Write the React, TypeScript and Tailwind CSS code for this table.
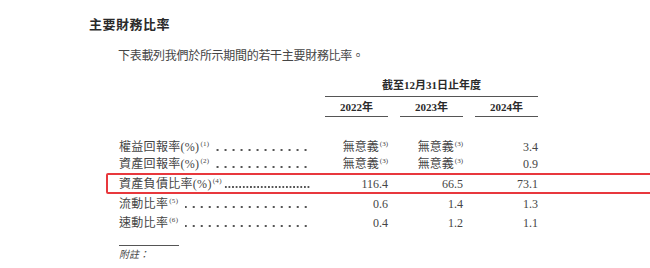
const serif = "font-['Liberation_Serif','Noto_Sans_CJK_TC',serif]";

type Row = {
  label: string;
  note: string;
  values: { v: string; note?: string }[];
  dense?: boolean;
  highlight?: boolean;
  h: string;
};

const rows: Row[] = [
  { label: '權益回報率(%)', note: '(1)', values: [{ v: '無意義', note: '(3)' }, { v: '無意義', note: '(3)' }, { v: '3.4' }], h: 'h-[17px]' },
  { label: '資產回報率(%)', note: '(2)', values: [{ v: '無意義', note: '(3)' }, { v: '無意義', note: '(3)' }, { v: '0.9' }], h: 'h-[17px]' },
  { label: '資產負債比率(%)', note: '(4)', values: [{ v: '116.4' }, { v: '66.5' }, { v: '73.1' }], dense: true, highlight: true, h: 'h-[21px]' },
  { label: '流動比率', note: '(5)', values: [{ v: '0.6' }, { v: '1.4' }, { v: '1.3' }], h: 'h-[19px]' },
  { label: '速動比率', note: '(6)', values: [{ v: '0.4' }, { v: '1.2' }, { v: '1.1' }], h: 'h-[19px]' },
];

// dot leader drawn as a repeating background, not text
const Dots = ({ dense }: { dense?: boolean }) => (
  <div
    className={
      dense
        ? 'flex-1 h-[2px] mb-[3px] ml-[2px] mr-[3px] bg-repeat-x bg-left bg-[length:3.6px_2px] bg-[radial-gradient(circle,#555_0.75px,transparent_1px)]'
        : 'flex-1 h-[2px] mb-[3px] ml-[7px] mr-[3px] bg-repeat-x bg-right bg-[length:8px_2px] bg-[radial-gradient(circle,#555_0.75px,transparent_1px)]'
    }
  />
);

const TableRow = ({ row }: { row: Row }) => (
  <div
    className={
      row.highlight
        ? `grid grid-cols-[194px_63px_63px_63px] gap-x-3 items-center ${row.h} mt-[1px] -ml-[13px] -mr-[10px] pl-[11px] pr-[8px] border-2 border-[#e8383d] rounded-[2px]`
        : `grid grid-cols-[194px_63px_63px_63px] gap-x-3 items-center ${row.h}`
    }
  >
    <div className="flex items-end">
      <span className="text-[12px] leading-[14px] tracking-[0.3px] whitespace-nowrap">
        {row.label}
        <span className="text-[7px] leading-none align-super ml-[1px]">{row.note}</span>
      </span>
      <Dots dense={row.dense} />
    </div>
    {row.values.map((c, i) => (
      <div key={i} className="text-right text-[12px] leading-[14px] whitespace-nowrap">
        {c.v}
        {c.note && <span className="text-[7px] leading-none align-super ml-[1px]">{c.note}</span>}
      </div>
    ))}
  </div>
);

export default function App() {
  return (
    <div className={`w-[650px] h-[268px] bg-white text-[#454545] ${serif} overflow-hidden`}>
      <div className="pl-[89px] pt-[15px]">
        <h2 className="font-['Noto_Sans_CJK_TC',sans-serif] font-bold text-[13px] leading-[18px] text-[#2a2a2a] tracking-[0.5px]">
          主要財務比率
        </h2>
      </div>
      <p className="pl-[118px] mt-[15px] text-[12px] leading-[16px] tracking-[-0.3px]">
        下表載列我們於所示期間的若干主要財務比率。
      </p>

      <div className="pl-[119px] mt-[14px]">
        {/* header */}
        <div className="grid grid-cols-[194px_63px_63px_63px] gap-x-3">
          <div />
          <div className="col-span-3 text-center font-bold text-[11px] leading-[14px] text-[#2a2a2a] border-b border-[#555] pb-[4px]">
            截至12月31日止年度
          </div>
        </div>
        <div className="grid grid-cols-[194px_63px_63px_63px] gap-x-3 mt-[3px]">
          <div />
          {['2022年', '2023年', '2024年'].map((y) => (
            <div key={y} className="text-center font-bold text-[11px] leading-[14px] text-[#2a2a2a] border-b border-[#555] pb-[2px]">
              {y}
            </div>
          ))}
        </div>

        <div className="mt-[21px] flex flex-col">
          {rows.map((r) => (
            <TableRow key={r.label} row={r} />
          ))}
        </div>

        <div className="w-[60px] border-b border-[#555] mt-[13px]" />
        <div className="italic text-[10px] mt-[3px] leading-[12px]">附註：</div>
      </div>
    </div>
  );
}
